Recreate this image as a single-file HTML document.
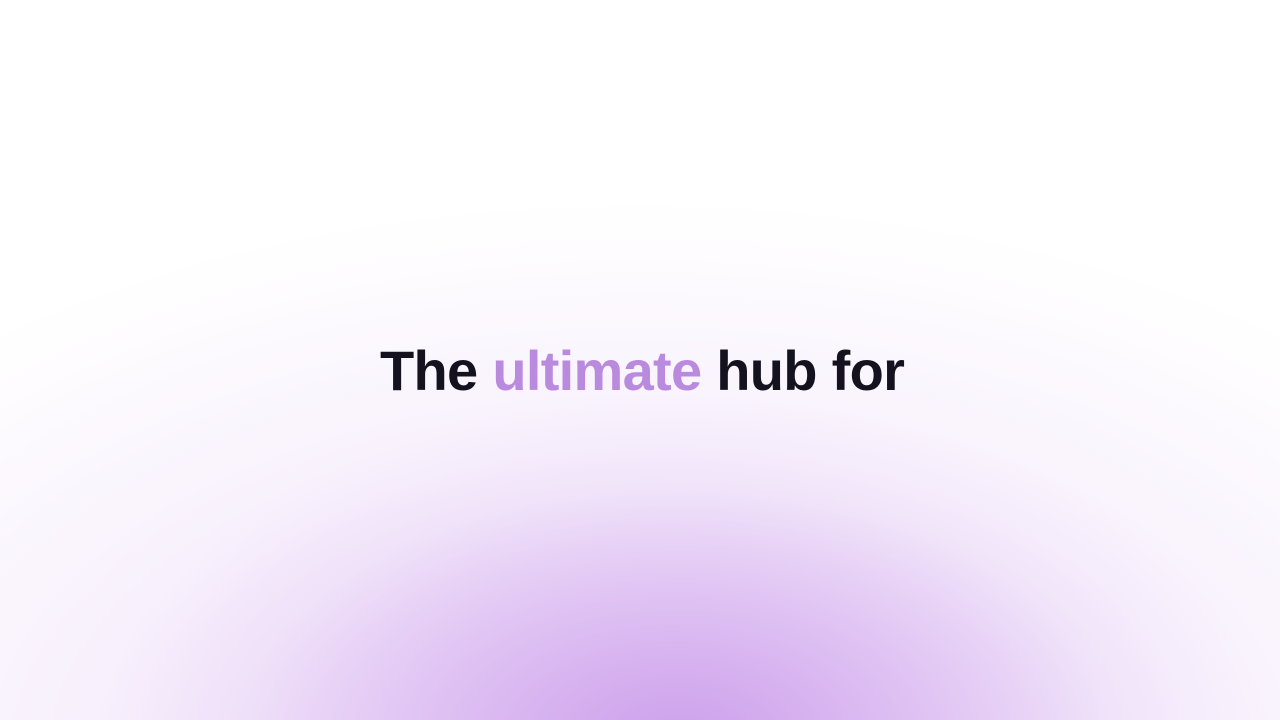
<!DOCTYPE html>
<html><head><meta charset="utf-8"><style>
html,body{margin:0;padding:0;width:1280px;height:720px;overflow:hidden}
body{background:
radial-gradient(ellipse 580px 340px at 680px 740px, rgba(205,160,235,1) 0%, rgba(215,180,240,0.7) 40%, rgba(230,210,245,0.3) 75%, rgba(255,255,255,0) 100%),
radial-gradient(ellipse 1000px 560px at 640px 760px, rgba(228,198,244,0.9) 0%, rgba(240,225,250,0.5) 55%, rgba(255,255,255,0) 100%),
#ffffff;}
h1{position:absolute;left:380px;top:336px;margin:0;font-family:"Liberation Sans",sans-serif;font-weight:700;font-size:56px;letter-spacing:-0.7px;color:#15121f;white-space:nowrap;line-height:70px}
h1 span{color:#b98ade}
</style></head><body>
<h1>The <span>ultimate</span> hub for</h1>
</body></html>
